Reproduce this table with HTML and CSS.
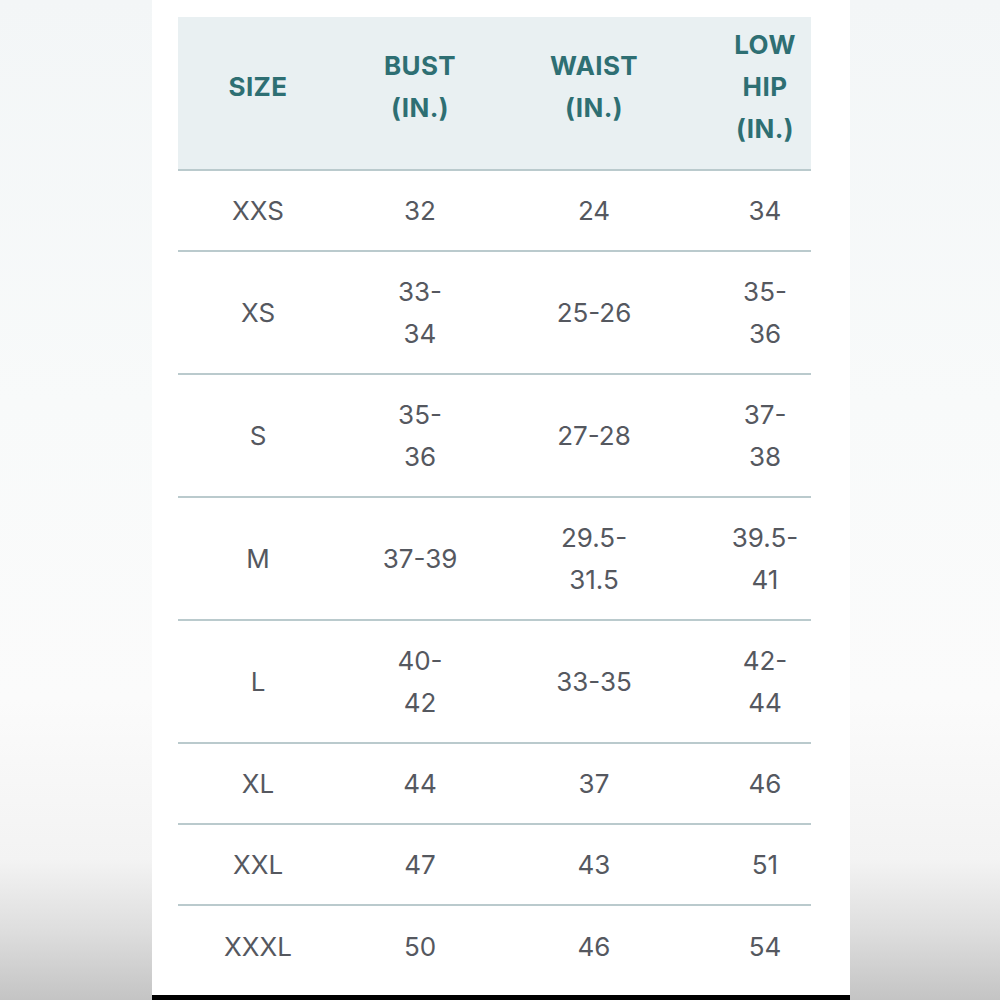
FILE: index.html
```html
<!DOCTYPE html>
<html lang="en">
<head>
<meta charset="utf-8">
<title>Size chart</title>
<link rel="stylesheet" href="styles.css">
</head>
<body>
<div class="page">
  <div class="panel">
    <div class="chart">
      <div class="row head">
        <div class="cell c1">SIZE</div>
        <div class="cell c2">BUST<br>(IN.)</div>
        <div class="cell c3">WAIST<br>(IN.)</div>
        <div class="cell c4">LOW<br>HIP<br>(IN.)</div>
      </div>
      <div class="row">
        <div class="cell c1">XXS</div>
        <div class="cell c2">32</div>
        <div class="cell c3">24</div>
        <div class="cell c4">34</div>
      </div>
      <div class="row tall">
        <div class="cell c1">XS</div>
        <div class="cell c2">33-<br>34</div>
        <div class="cell c3">25-26</div>
        <div class="cell c4">35-<br>36</div>
      </div>
      <div class="row tall">
        <div class="cell c1">S</div>
        <div class="cell c2">35-<br>36</div>
        <div class="cell c3">27-28</div>
        <div class="cell c4">37-<br>38</div>
      </div>
      <div class="row tall">
        <div class="cell c1">M</div>
        <div class="cell c2">37-39</div>
        <div class="cell c3">29.5-<br>31.5</div>
        <div class="cell c4">39.5-<br>41</div>
      </div>
      <div class="row tall">
        <div class="cell c1">L</div>
        <div class="cell c2">40-<br>42</div>
        <div class="cell c3">33-35</div>
        <div class="cell c4">42-<br>44</div>
      </div>
      <div class="row">
        <div class="cell c1">XL</div>
        <div class="cell c2">44</div>
        <div class="cell c3">37</div>
        <div class="cell c4">46</div>
      </div>
      <div class="row">
        <div class="cell c1">XXL</div>
        <div class="cell c2">47</div>
        <div class="cell c3">43</div>
        <div class="cell c4">51</div>
      </div>
      <div class="row last">
        <div class="cell c1">XXXL</div>
        <div class="cell c2">50</div>
        <div class="cell c3">46</div>
        <div class="cell c4">54</div>
      </div>
    </div>
  </div>
</div>
</body>
</html>
```

FILE: styles.css
```css
html, body {
  margin: 0;
  padding: 0;
}

body {
  width: 1000px;
  height: 1000px;
  overflow: hidden;
  background: linear-gradient(to bottom, #f3f6f7 0%, #f8fafa 40%, #fbfbfb 70%, #f3f3f3 86%, #dedede 93%, #c4c4c4 100%);
  font-family: Inter, "Liberation Sans", sans-serif;
}

.page {
  display: flex;
  justify-content: center;
}

.panel {
  width: 698px;
  height: 995px;
  margin-left: 2px;
  background: #ffffff;
  border-bottom: 5px solid #000000;
  padding: 17px 39px 0 26px;
  box-sizing: content-box;
  box-sizing: border-box;
  height: 1000px;
}

.chart {
  width: 633px;
}

.row {
  display: grid;
  grid-template-columns: 160px 164px 184px 125px;
  align-items: center;
  height: 81px;
  box-sizing: border-box;
  border-bottom: 2px solid #bacacd;
  color: #55585f;
  font-size: 26px;
  line-height: 42px;
}

.row.tall {
  height: 123px;
}

.row.last {
  border-bottom: none;
}

.row.head {
  height: 154px;
  background: #e9f0f2;
  color: #2e6f73;
  font-weight: 700;
  font-size: 26px;
  letter-spacing: 0.4px;
  padding: 7px 0 19px;
}

.cell {
  text-align: center;
}

.c4 {
  padding-left: 33px;
}
```
